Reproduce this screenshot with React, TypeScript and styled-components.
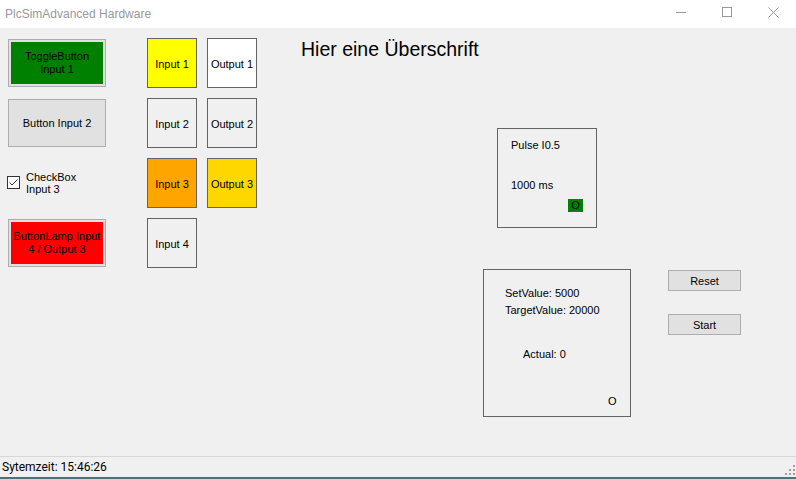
import styled, { createGlobalStyle } from 'styled-components'

const GlobalStyle = createGlobalStyle`
  html, body {
    margin: 0;
    padding: 0;
    background: #f0f0f0;
    overflow: hidden;
  }
  body {
    font-family: 'Liberation Sans', Arial, sans-serif;
    font-size: 11px;
    color: #000;
  }
  * {
    box-sizing: border-box;
  }
`

const ioRows = [
  [
    { label: 'Input 1', color: '#ffff00' },
    { label: 'Output 1', color: '#ffffff' },
  ],
  [
    { label: 'Input 2', color: '#f0f0f0' },
    { label: 'Output 2', color: '#f0f0f0' },
  ],
  [
    { label: 'Input 3', color: '#ffa500' },
    { label: 'Output 3', color: '#ffd700' },
  ],
  [{ label: 'Input 4', color: '#f0f0f0' }],
]

const App = () => {
  return (
    <Window>
      <GlobalStyle />
      <TitleBar>
        <Title>PlcSimAdvanced Hardware</Title>
        <Controls>
          <ControlButton>
            <svg width="10" height="10" viewBox="0 0 10 10">
              <line x1="0" y1="5.5" x2="10" y2="5.5" stroke="#999" strokeWidth="1" />
            </svg>
          </ControlButton>
          <ControlButton>
            <svg width="10" height="10" viewBox="0 0 10 10">
              <rect x="0.5" y="0.5" width="9" height="9" fill="none" stroke="#999" strokeWidth="1" />
            </svg>
          </ControlButton>
          <ControlButton>
            <svg width="11" height="11" viewBox="0 0 11 11">
              <path d="M0.5 0.5 L10.5 10.5 M10.5 0.5 L0.5 10.5" stroke="#999" strokeWidth="1" />
            </svg>
          </ControlButton>
        </Controls>
      </TitleBar>

      <Client>
        <LeftColumn>
          <LampButton>
            <LampFill $color="#008000">
              ToggleButton
              <br />
              Input 1
            </LampFill>
          </LampButton>
          <PlainButton>Button Input 2</PlainButton>
          <CheckRow>
            <CheckBox>
              <svg width="11" height="11" viewBox="0 0 11 11">
                <polyline points="1.5,5.5 4,8 9.5,2.5" fill="none" stroke="#333" strokeWidth="1" />
              </svg>
            </CheckBox>
            <CheckLabel>
              CheckBox
              <br />
              Input 3
            </CheckLabel>
          </CheckRow>
          <LampButton>
            <LampFill $color="#ff0000">
              ButtonLamp Input
              <br />4 / Output 3
            </LampFill>
          </LampButton>
        </LeftColumn>

        <IoGrid>
          {ioRows.flat().map((io) => (
            <IoBox key={io.label} $color={io.color}>
              {io.label}
            </IoBox>
          ))}
        </IoGrid>

        <RightArea>
          <Heading>Hier eine Überschrift</Heading>
          <PulseBox>
            <Line>Pulse I0.5</Line>
            <Line $top={27}>1000 ms</Line>
            <PulseLamp>O</PulseLamp>
          </PulseBox>
          <LowerRow>
            <CounterBox>
              <Line>SetValue: 5000</Line>
              <Line $top={4}>TargetValue: 20000</Line>
              <Line $top={31} $left={18}>
                Actual: 0
              </Line>
              <Line $top={34} $left={103}>
                O
              </Line>
            </CounterBox>
            <ButtonColumn>
              <SmallButton>Reset</SmallButton>
              <SmallButton>Start</SmallButton>
            </ButtonColumn>
          </LowerRow>
        </RightArea>
      </Client>

      <StatusBar>
        <StatusText>Sytemzeit: 15:46:26</StatusText>
        <Grip width="12" height="12" viewBox="0 0 12 12">
          <rect x="9" y="1" width="2" height="2" fill="#a0a0a0" />
          <rect x="5" y="5" width="2" height="2" fill="#a0a0a0" />
          <rect x="9" y="5" width="2" height="2" fill="#a0a0a0" />
          <rect x="1" y="9" width="2" height="2" fill="#a0a0a0" />
          <rect x="5" y="9" width="2" height="2" fill="#a0a0a0" />
          <rect x="9" y="9" width="2" height="2" fill="#a0a0a0" />
        </Grip>
      </StatusBar>
      <BottomEdge />
    </Window>
  )
}

export default App

const Window = styled.div`
  width: 796px;
  height: 479px;
  display: flex;
  flex-direction: column;
  background: #f0f0f0;
`

const TitleBar = styled.div`
  height: 28px;
  flex: none;
  background: #fff;
  display: flex;
  align-items: center;
  padding-left: 5px;
`

const Title = styled.div`
  font-size: 12px;
  color: #999;
`

const Controls = styled.div`
  margin-left: auto;
  display: flex;
  align-self: flex-start;
`

const ControlButton = styled.div`
  width: 46px;
  height: 28px;
  display: flex;
  justify-content: center;
  padding-top: 7px;
`

const Client = styled.div`
  flex: 1;
  display: flex;
  padding-left: 8px;
`

const LeftColumn = styled.div`
  width: 98px;
  display: flex;
  flex-direction: column;
  gap: 12px;
  padding-top: 11px;
`

const LampButton = styled.div`
  height: 48px;
  border: 1px solid #adadad;
  background: #e1e1e1;
  padding: 2px;
  display: flex;
`

const LampFill = styled.div<{ $color: string }>`
  flex: 1;
  background: ${(p) => p.$color};
  display: flex;
  align-items: center;
  justify-content: center;
  text-align: center;
  line-height: 13px;
`

const PlainButton = styled.div`
  height: 48px;
  border: 1px solid #adadad;
  background: #e1e1e1;
  display: flex;
  align-items: center;
  justify-content: center;
`

const CheckRow = styled.div`
  height: 48px;
  display: flex;
  align-items: center;
  margin-left: -1px;
`

const CheckBox = styled.div`
  width: 13px;
  height: 13px;
  border: 1px solid #333;
  background: #fff;
  display: flex;
  align-items: center;
  justify-content: center;
  margin-top: -1px;
`

const CheckLabel = styled.div`
  margin-left: 6px;
  line-height: 12px;
`

const IoGrid = styled.div`
  margin-left: 41px;
  padding-top: 10px;
  display: grid;
  grid-template-columns: 50px 50px;
  grid-auto-rows: 50px;
  gap: 10px;
  align-content: start;
`

const IoBox = styled.div<{ $color: string }>`
  border: 1px solid #646464;
  background: ${(p) => p.$color};
  display: flex;
  align-items: center;
  justify-content: center;
  padding-top: 1px;
`

const RightArea = styled.div`
  margin-left: 44px;
  padding-top: 10px;
  display: flex;
  flex-direction: column;
`

const Heading = styled.h1`
  margin: 0;
  font-size: 19.5px;
  line-height: 23px;
  font-weight: normal;
`

const PulseBox = styled.div`
  margin-left: 196px;
  margin-top: 67px;
  width: 100px;
  height: 100px;
  border: 1px solid #646464;
  padding: 10px 0 0 13px;
  display: flex;
  flex-direction: column;
  align-items: flex-start;
`

const Line = styled.div<{ $top?: number; $left?: number }>`
  line-height: 13px;
  margin-top: ${(p) => p.$top ?? 0}px;
  margin-left: ${(p) => p.$left ?? 0}px;
  white-space: nowrap;
`

const PulseLamp = styled.div`
  width: 15px;
  height: 13px;
  margin: 7px 0 0 57px;
  background: #008000;
  line-height: 13px;
  text-align: center;
`

const LowerRow = styled.div`
  display: flex;
  margin-top: 41px;
  margin-left: 182px;
`

const CounterBox = styled.div`
  width: 148px;
  height: 148px;
  border: 1px solid #646464;
  padding: 17px 0 0 21px;
  display: flex;
  flex-direction: column;
  align-items: flex-start;
`

const ButtonColumn = styled.div`
  margin-left: 37px;
  padding-top: 1px;
  display: flex;
  flex-direction: column;
  gap: 23px;
`

const SmallButton = styled.div`
  width: 73px;
  height: 21px;
  border: 1px solid #adadad;
  background: #e1e1e1;
  display: flex;
  align-items: center;
  justify-content: center;
`

const StatusBar = styled.div`
  height: 21px;
  flex: none;
  border-top: 1px solid #d7d7d7;
  display: flex;
  align-items: center;
  padding-left: 2px;
`

const StatusText = styled.div`
  font-family: Roboto, 'Liberation Sans', sans-serif;
  font-size: 12px;
`

const Grip = styled.svg`
  margin-left: auto;
  align-self: flex-end;
  margin-bottom: 1px;
`

const BottomEdge = styled.div`
  height: 2px;
  flex: none;
  background: #3b7a78;
`
